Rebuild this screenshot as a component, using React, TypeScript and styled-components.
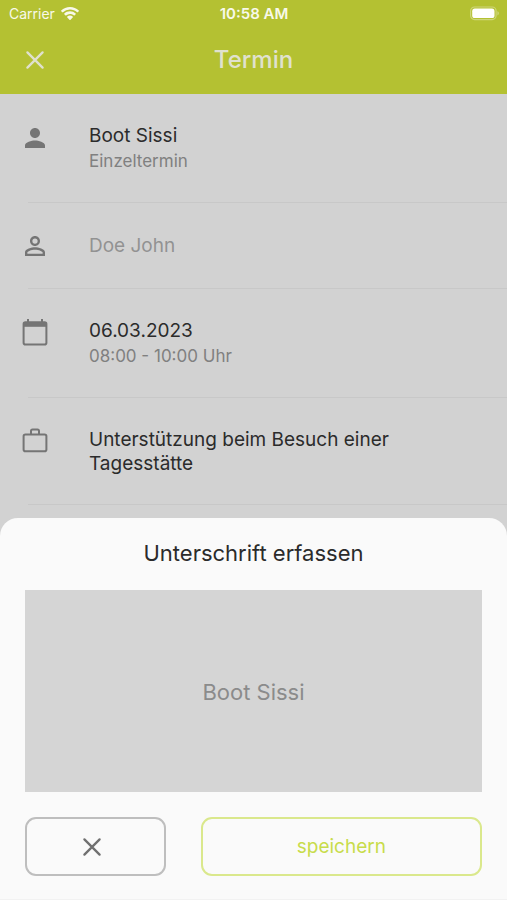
import React from 'react';
import styled, { createGlobalStyle } from 'styled-components';
import { MdPerson, MdPersonOutline } from 'react-icons/md';

const GlobalStyle = createGlobalStyle`
  *, *::before, *::after { box-sizing: border-box; }
  body {
    margin: 0;
    background: #d2d2d2;
    font-family: Inter, Roboto, sans-serif;
    color: #2b2b2b;
  }
  h1, h2, p, ul { margin: 0; padding: 0; font-weight: 400; }
  button { font: inherit; cursor: pointer; }
`;

const Screen = styled.div`
  display: flex;
  flex-direction: column;
  min-height: 100vh;
`;

const Header = styled.header`
  background: #b4c132;
`;

const StatusBar = styled.div`
  display: grid;
  grid-template-columns: 1fr auto 1fr;
  align-items: center;
  height: 27px;
  padding: 0 8px 0 9px;
  font-size: 14px;
  color: #f8f9ea;
`;

const Carrier = styled.div`
  display: flex;
  align-items: center;
  gap: 6px;
`;

const Clock = styled.time`
  font-size: 15px;
  font-weight: 600;
`;

const BatterySlot = styled.div`
  display: flex;
  justify-content: flex-end;
`;

const NavBar = styled.div`
  display: grid;
  grid-template-columns: 30px 1fr 30px;
  align-items: center;
  height: 67px;
  padding: 0 20px 2px;
  color: #e0e1cf;
`;

const IconButton = styled.button`
  display: flex;
  padding: 0;
  border: 0;
  background: none;
  color: inherit;
`;

const PageTitle = styled.h1`
  && { font-weight: 500; }
  font-size: 24px;
  line-height: 32px;
  text-align: center;
`;

const Details = styled.ul`
  list-style: none;
`;

const DetailRow = styled.li`
  margin-left: 28px;
  border-bottom: 1px solid #c8c8c8;
`;

const DetailContent = styled.div<{ $centered?: boolean }>`
  display: flex;
  align-items: ${({ $centered }) => ($centered ? 'center' : 'flex-start')};
  gap: 39px;
  margin-left: -8px;
  padding: ${({ $centered }) => ($centered ? '28px' : '29px')} 20px 27px 0;
  color: #757575;
`;

const DetailText = styled.div`
  flex: 1;
  min-width: 0;
  padding: 1px 0;
`;

const Primary = styled.p<{ $muted?: boolean }>`
  max-width: 340px;
  font-size: 19px;
  line-height: 24px;
  color: ${({ $muted }) => ($muted ? '#929292' : '#2b2b2b')};
`;

const Secondary = styled.p`
  font-size: 17px;
  line-height: 26px;
  color: #808080;
`;

const Sheet = styled.section`
  position: fixed;
  right: 0;
  bottom: 0;
  left: 0;
  padding: 19px 25px 23px;
  border-bottom: 1px solid #f2f2f2;
  border-radius: 18px 18px 0 0;
  background: #fafafa;
`;

const SheetTitle = styled.h2`
  font-size: 22px;
  line-height: 32px;
  text-align: center;
`;

const SignaturePad = styled.div`
  display: flex;
  align-items: center;
  justify-content: center;
  height: 202px;
  margin: 21px 0 25px;
  padding-top: 2px;
  background: #d5d5d5;
  font-size: 22px;
  color: #8b8b8b;
`;

const Actions = styled.div`
  display: grid;
  grid-template-columns: 1fr 2fr;
  gap: 35px;
`;

const ActionButton = styled.button<{ $primary?: boolean }>`
  display: flex;
  align-items: center;
  justify-content: center;
  height: 59px;
  padding: ${({ $primary }) => ($primary ? '0' : '0 6px 0 0')};
  border: 2px solid ${({ $primary }) => ($primary ? '#dae88c' : '#bebebe')};
  border-radius: 11px;
  background: transparent;
  font-size: 19px;
  color: ${({ $primary }) => ($primary ? '#c8dc4b' : '#707070')};
`;

const LineIcon = styled.svg.attrs({
  width: 30,
  height: 30,
  viewBox: '0 0 30 30',
  fill: 'none',
  stroke: 'currentColor',
  strokeWidth: 2,
  'aria-hidden': true,
})`
  flex: none;
`;

const CloseIcon = () => (
  <LineIcon>
    <path d="M7.400 7.400l15.200 15.200M22.600 7.400L7.400 22.600" strokeWidth="2.300" strokeLinecap="round" />
  </LineIcon>
);

const CalendarIcon = () => (
  <LineIcon>
    <rect x="3.600" y="4.200" width="22.800" height="22.400" rx="1.800" />
    <path d="M3.600 4.200h22.800v4.600H3.600Z" fill="currentColor" stroke="none" />
    <path d="M8 1v4M22 1v4" />
  </LineIcon>
);

const BriefcaseIcon = () => (
  <LineIcon>
    <rect x="3.600" y="7.400" width="22.800" height="16.800" rx="1.800" />
    <path d="M11 7.400V4a1.500 1.500 0 0 1 1.500-1.500h5A1.500 1.500 0 0 1 19 4v3.400" />
  </LineIcon>
);

const PersonIcon = () => <MdPerson size={30} />;
const PersonOutlineIcon = () => <MdPersonOutline size={30} />;

const WifiIcon = () => (
  <svg width="18" height="14" viewBox="0 0 18 14" fill="currentColor" aria-hidden="true">
    <path d="M9 0C5.600 0 2.500 1.300.2 3.500a.5.500 0 0 0 0 .7l1.100 1.100c.2.200.4.200.6 0A10.300 10.300 0 0 1 9 2.600c2.700 0 5.200 1 7.100 2.700.2.200.4.200.6 0l1.100-1.100a.5.500 0 0 0 0-.7A12.700 12.700 0 0 0 9 0Z" />
    <path d="M9 4.300c-2.200 0-4.200.8-5.700 2.200a.5.500 0 0 0 0 .7l1.200 1.200c.2.200.4.200.6 0A5.800 5.800 0 0 1 9 6.900c1.500 0 2.900.5 3.900 1.500.2.200.4.200.6 0l1.200-1.200a.5.500 0 0 0 0-.7A8.300 8.300 0 0 0 9 4.300Z" />
    <path d="M9 8.600c-1 0-2 .4-2.700 1a.5.500 0 0 0 0 .8l2.400 2.500c.2.200.4.200.6 0l2.400-2.500a.5.500 0 0 0 0-.8c-.7-.6-1.700-1-2.700-1Z" />
  </svg>
);

const BatteryIcon = () => (
  <svg width="29" height="15" viewBox="0 0 29 15" aria-hidden="true">
    <rect x="0.600" y="1" width="25.500" height="12.600" rx="4" fill="none" stroke="#cdd67a" strokeWidth="1.200" />
    <rect x="2.200" y="2.600" width="22.300" height="9.400" rx="2.600" fill="#ffffff" />
    <path d="M27.400 5.200c1 .4 1.500 1.200 1.500 2.100s-.5 1.700-1.500 2.100Z" fill="#cdd67a" />
  </svg>
);

const rows = [
  { icon: PersonIcon, primary: 'Boot Sissi', secondary: 'Einzeltermin' },
  { icon: PersonOutlineIcon, primary: 'Doe John', muted: true },
  { icon: CalendarIcon, primary: '06.03.2023', secondary: '08:00 - 10:00 Uhr' },
  { icon: BriefcaseIcon, primary: 'Unterstützung beim Besuch einer Tagesstätte' },
];

export default function App() {
  return (
    <>
      <GlobalStyle />
      <Screen>
        <Header>
          <StatusBar>
            <Carrier>
              Carrier
              <WifiIcon />
            </Carrier>
            <Clock>10:58 AM</Clock>
            <BatterySlot>
              <BatteryIcon />
            </BatterySlot>
          </StatusBar>
          <NavBar>
            <IconButton type="button" aria-label="Schließen">
              <CloseIcon />
            </IconButton>
            <PageTitle>Termin</PageTitle>
          </NavBar>
        </Header>
        <Details>
          {rows.map(({ icon: Icon, primary, secondary, muted }) => (
            <DetailRow key={primary}>
              <DetailContent $centered={muted}>
                <Icon />
                <DetailText>
                  <Primary $muted={muted}>{primary}</Primary>
                  {secondary && <Secondary>{secondary}</Secondary>}
                </DetailText>
              </DetailContent>
            </DetailRow>
          ))}
        </Details>
      </Screen>
      <Sheet role="dialog" aria-labelledby="signature-title">
        <SheetTitle id="signature-title">Unterschrift erfassen</SheetTitle>
        <SignaturePad>Boot Sissi</SignaturePad>
        <Actions>
          <ActionButton type="button" aria-label="Abbrechen">
            <CloseIcon />
          </ActionButton>
          <ActionButton type="button" $primary>
            speichern
          </ActionButton>
        </Actions>
      </Sheet>
    </>
  );
}
